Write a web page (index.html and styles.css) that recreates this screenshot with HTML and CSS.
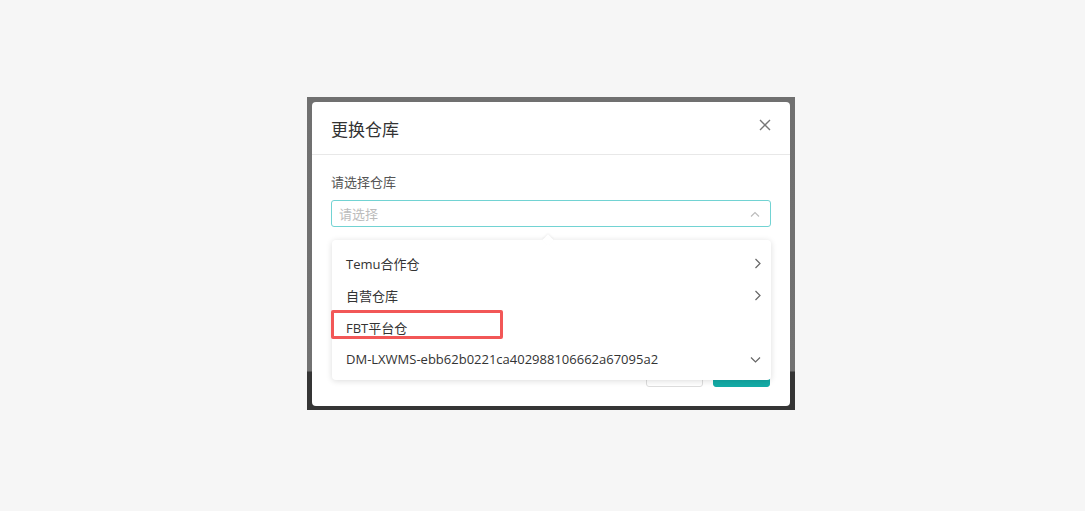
FILE: index.html
```html
<!DOCTYPE html>
<html lang="zh-CN">
  <head>
    <meta charset="UTF-8" />
    <title>更换仓库</title>
    <link rel="stylesheet" href="styles.css">
  </head>
  <body>
    <div class="shot">
      <div class="modal">
        <div class="modal-head">
          <span class="modal-title">更换仓库</span>
          <svg class="close" width="12" height="12" viewBox="0 0 12 12">
            <path d="M1 1L11 11M11 1L1 11" stroke="#777" stroke-width="1.4" fill="none" />
          </svg>
        </div>
        <div class="modal-body">
          <div class="label">请选择仓库</div>
          <div class="select">
            <span class="placeholder">请选择</span>
            <svg class="arrow" width="10" height="6" viewBox="0 0 10 6">
              <path d="M1 5.5L5 1.5L9 5.5" stroke="#bbb" stroke-width="1.1" fill="none" />
            </svg>
          </div>
        </div>
        <div class="modal-foot">
          <button class="btn">取消</button>
          <button class="btn primary">确定</button>
        </div>

        <div class="dropdown">
          <div class="item">
            <span>Temu合作仓</span>
            <svg width="7" height="11" viewBox="0 0 7 11"><path d="M1.5 1L6 5.5L1.5 10" stroke="#666" stroke-width="1.2" fill="none" /></svg>
          </div>
          <div class="item">
            <span>自营仓库</span>
            <svg width="7" height="11" viewBox="0 0 7 11"><path d="M1.5 1L6 5.5L1.5 10" stroke="#666" stroke-width="1.2" fill="none" /></svg>
          </div>
          <div class="item">
            <span>FBT平台仓</span>
          </div>
          <div class="item">
            <span>DM-LXWMS-ebb62b0221ca402988106662a67095a2</span>
            <svg width="11" height="7" viewBox="0 0 11 7"><path d="M1 1.5L5.5 6L10 1.5" stroke="#666" stroke-width="1.2" fill="none" /></svg>
          </div>
        </div>
        <div class="mark"></div>
      </div>
    </div>
  </body>
</html>
```

FILE: styles.css
```css
body {
  margin: 0;
  background: #f6f6f6;
  font-family: "Open Sans", "Noto Sans CJK SC", sans-serif;
  height: 511px;
}

.shot {
  margin-left: 307px;
  margin-top: 0;
  position: relative;
  top: 97px;
  width: 478px;
  height: 304px;
  padding: 5px 5px 4px 5px;
  background: linear-gradient(#707070 0, #727272 274px, #353535 275px, #353535 100%);
}

.modal {
  position: relative;
  width: 478px;
  height: 304px;
  background: #fff;
  border-radius: 4px;
}

.modal-head {
  height: 52px;
  border-bottom: 1px solid #e8e8e8;
  display: flex;
  align-items: center;
  justify-content: space-between;
  padding: 0 19px 0 19px;
}

.modal-title {
  font-size: 17px;
  color: #333;
  margin-top: 1px;
}

.close {
  margin-top: -6px;
  margin-right: 0;
}

.modal-body {
  padding: 18px 19px 0 19px;
}

.label {
  font-size: 13px;
  color: #555;
  line-height: 18px;
}

.select {
  margin-top: 9px;
  height: 25px;
  border: 1px solid #72d3d3;
  border-radius: 3px;
  display: flex;
  align-items: center;
  justify-content: space-between;
  padding: 0 10px 0 7px;
}

.placeholder {
  font-size: 13px;
  color: #bcbcbc;
}

.modal-foot {
  position: absolute;
  right: 20px;
  bottom: 19px;
  display: flex;
  gap: 10px;
}

.btn {
  width: 57px;
  height: 30px;
  border: 1px solid #ddd;
  border-radius: 3px;
  background: #fff;
  font-family: inherit;
  font-size: 13px;
  color: #333;
}

.btn.primary {
  background: #13aba6;
  border-color: #13aba6;
  color: #fff;
}

.dropdown {
  position: absolute;
  left: 20px;
  top: 138px;
  width: 439px;
  padding: 7px 0 5px 0;
  background: #fff;
  border-radius: 4px;
  box-shadow: 0 1px 6px rgba(0, 0, 0, 0.14);
}

.dropdown::before {
  content: "";
  position: absolute;
  left: 212px;
  top: -4px;
  width: 8px;
  height: 8px;
  background: #fff;
  transform: rotate(45deg);
  box-shadow: -1px -1px 2px rgba(0, 0, 0, 0.06);
}

.item {
  height: 32px;
  display: flex;
  align-items: center;
  justify-content: space-between;
  padding: 0 10px 0 14px;
  font-size: 13px;
  color: #333;
}

.mark {
  position: absolute;
  left: 19px;
  top: 208px;
  width: 166px;
  height: 23px;
  border: 3px solid #f25757;
  border-radius: 2px;
}
```
